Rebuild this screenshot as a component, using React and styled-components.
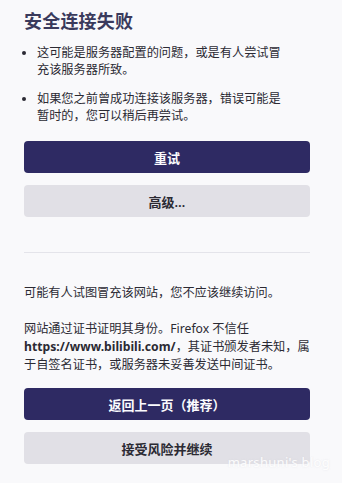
import styled, { createGlobalStyle } from 'styled-components'

const GlobalStyle = createGlobalStyle`
  html, body {
    margin: 0;
    padding: 0;
    background: #f9f9fb;
  }
  body {
    font-family: "Noto Sans", "Noto Sans CJK SC", sans-serif;
    color: #2b2a33;
  }
`

const Page = styled.div`
  position: relative;
  width: 342px;
  height: 483px;
  overflow: hidden;
  box-sizing: border-box;
  padding: 9px 32px 0 24px;
  display: flex;
  flex-direction: column;
`

const Title = styled.h1`
  margin: 0;
  font-size: 18px;
  line-height: 24px;
  font-weight: 600;
  color: #3a3a5c;
  letter-spacing: 0.2px;
`

const List = styled.ul`
  margin: 11px 0 0;
  padding: 0 20px 0 13px;
  display: flex;
  flex-direction: column;
  gap: 12px;
`

const Item = styled.li`
  font-size: 12.2px;
  line-height: 17px;
  &::marker {
    font-size: 11px;
  }
`

const Buttons = styled.div`
  display: flex;
  flex-direction: column;
  gap: 12px;
  margin-top: ${props => props.top}px;
`

const Button = styled.button`
  height: 32px;
  width: 100%;
  border: none;
  border-radius: 4px;
  font-family: "Noto Sans", "Noto Sans CJK SC", sans-serif;
  font-size: 13px;
  font-weight: 600;
  background: ${props => props.primary ? '#2e2a63' : '#e1e0e6'};
  color: ${props => props.primary ? '#fbfbfe' : '#2b2a33'};
  cursor: pointer;
`

const Divider = styled.hr`
  margin: 35px 0 0;
  border: none;
  border-top: 1px solid #e4e4ea;
`

const Para = styled.p`
  margin: ${props => props.top}px 0 0;
  font-size: 12.2px;
  line-height: 18px;
`

const Url = styled.b`
  font-weight: 700;
  line-height: 18px;
`

const Watermark = styled.div`
  position: absolute;
  right: 12px;
  bottom: 12px;
  font-family: "Noto Sans", sans-serif;
  font-size: 13px;
  color: rgba(255, 255, 255, 0.92);
  text-shadow: 0 0 2px rgba(200, 200, 210, 0.4);
  letter-spacing: 0.3px;
`

export default function App() {
  return (
    <Page>
      <GlobalStyle />
      <Title>安全连接失败</Title>
      <List>
        <Item>这可能是服务器配置的问题，或是有人尝试冒充该服务器所致。</Item>
        <Item>如果您之前曾成功连接该服务器，错误可能是暂时的，您可以稍后再尝试。</Item>
      </List>
      <Buttons top={17}>
        <Button primary>重试</Button>
        <Button>高级…</Button>
      </Buttons>
      <Divider />
      <Para top={31}>可能有人试图冒充该网站，您不应该继续访问。</Para>
      <Para top={18}>
        网站通过证书证明其身份。Firefox 不信任 <Url>https://www.bilibili.com/</Url>，其证书颁发者未知，属于自签名证书，或服务器未妥善发送中间证书。
      </Para>
      <Buttons top={14}>
        <Button primary>返回上一页（推荐）</Button>
        <Button>接受风险并继续</Button>
      </Buttons>
      <Watermark>marshuni's blog</Watermark>
    </Page>
  )
}
